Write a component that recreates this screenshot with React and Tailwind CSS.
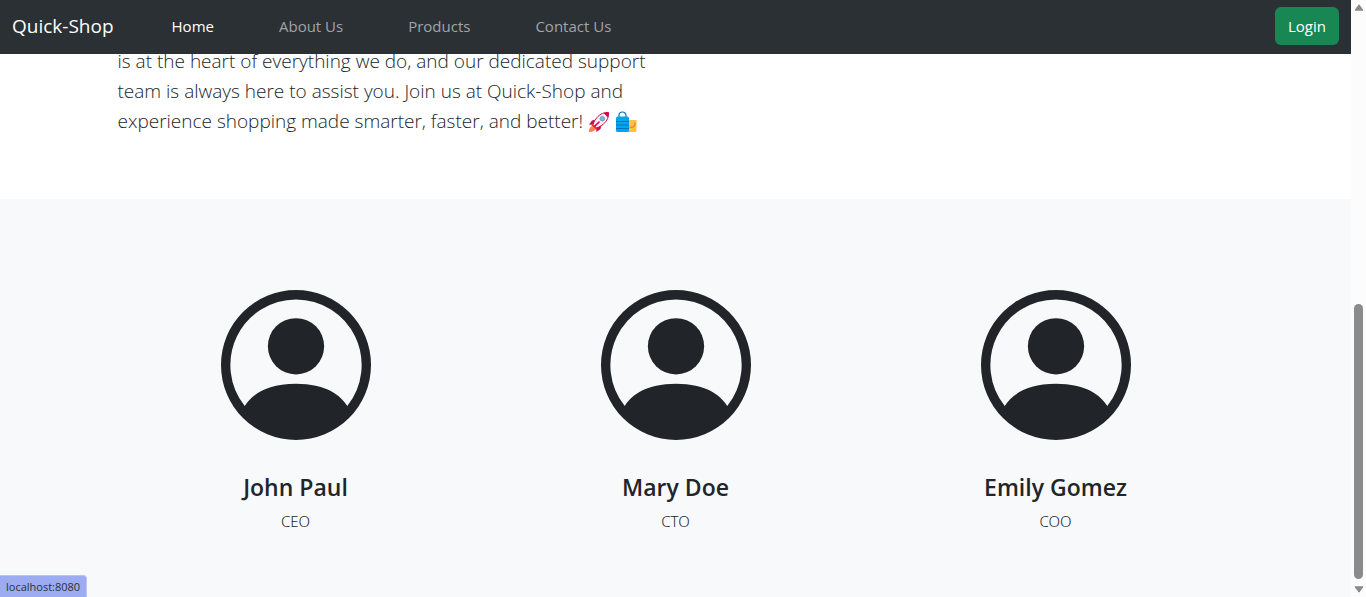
const links = [
  { label: "Home", href: "#home", active: true },
  { label: "About Us", href: "#about" },
  { label: "Products", href: "#products" },
  { label: "Contact Us", href: "#contact" },
];

const team = [
  { name: "John Paul", role: "CEO" },
  { name: "Mary Doe", role: "CTO" },
  { name: "Emily Gomez", role: "COO" },
];

function PersonCircle() {
  return (
    <svg viewBox="0 0 16 16" fill="currentColor" className="size-[150px]" aria-hidden="true">
      <path d="M11 6a3 3 0 1 1-6 0 3 3 0 0 1 6 0" />
      <path
        fillRule="evenodd"
        d="M0 8a8 8 0 1 1 16 0A8 8 0 0 1 0 8m8-7a7 7 0 0 0-5.468 11.37C3.242 11.226 4.805 10 8 10s4.757 1.225 5.468 2.37A7 7 0 0 0 8 1"
      />
    </svg>
  );
}

function Rocket() {
  return (
    <svg viewBox="0 0 22 22" className="inline-block size-[22px] align-[-5px]" role="img" aria-label="rocket">
      <path d="M1 21c-.3-2.500.8-5 3-6l3.300 3.300c-.8 2-3.500 3-6.300 2.700z" fill="#ff8257" />
      <path d="M8 8.500 4 9.500 1 13.500l5.500.500zM13.500 14l-1 4-4 3-.500-5.500z" fill="#ca0b4a" />
      <path
        d="M20.500 1.500c.6 4-1.500 8.500-5 11.500-2 1.700-4.500 3.300-7 4L5 13.500c.7-2.500 2.300-5 4-7C12 3 16.500 1 20.500 1.500z"
        fill="#f4f0f5"
        stroke="#ca0b4a"
        strokeWidth="1"
      />
      <path d="M15.500 2.100c1.700-.6 3.400-.8 5-.6.3 1.700 0 3.400-.6 5z" fill="#ca0b4a" />
      <circle cx="14.300" cy="7.700" r="2.300" fill="#6dbbe8" stroke="#7d8ba0" strokeWidth=".8" />
      <path d="m4.300 12.300 5.400 5.400-2.200.8-4-4z" fill="#f8312f" />
      <path d="m7 15 4-4" stroke="#ca0b4a" strokeWidth="1.600" strokeLinecap="round" />
    </svg>
  );
}

function ShoppingBags() {
  return (
    <svg viewBox="0 0 22 22" className="inline-block size-[22px] align-[-5px]" role="img" aria-label="shopping bags">
      <path d="M11 9h10.500v11a1 1 0 0 1-1 1H11z" fill="#ffc23d" />
      <path d="M20 11.500v1.500a3.500 3.500 0 0 1-5 3" fill="none" stroke="#e97e32" strokeWidth="1.200" strokeLinecap="round" />
      <path d="M4 6V4.500a3.500 3.500 0 0 1 7 0V6" fill="none" stroke="#0078b8" strokeWidth="1.200" />
      <path d="M2 5.500h11l1 1.500v12.500a1.500 1.500 0 0 1-1.500 1.500h-10A1.500 1.500 0 0 1 1 19.500V7z" fill="#00a6ed" />
      <path d="M1 10.500h13M1 14h13M1 17.500h13" stroke="#0074ba" strokeWidth="1" />
    </svg>
  );
}

function Scrollbar() {
  return (
    <div className="flex w-[15px] shrink-0 flex-col items-center bg-[#fcfcfc] py-1" aria-hidden="true">
      <svg viewBox="0 0 10 7" className="h-[7px] w-[10px]">
        <path d="M5 .8 9 6.200H1z" fill="#8b8b8b" stroke="#8b8b8b" strokeLinejoin="round" />
      </svg>
      <div className="flex w-[9px] flex-1 flex-col justify-end pb-[7px]">
        <div className="h-[48.5%] rounded-full bg-[#8b8b8b]" />
      </div>
      <svg viewBox="0 0 10 7" className="h-[7px] w-[10px]">
        <path d="M5 6.200 9 .8H1z" fill="#8b8b8b" stroke="#8b8b8b" strokeLinejoin="round" />
      </svg>
    </div>
  );
}

export default function App() {
  return (
    <div className="relative flex h-screen bg-white font-['Open_Sans','Noto_Sans',sans-serif] text-[#212529]">
      <div className="flex min-w-0 flex-1 flex-col overflow-hidden">
        <header className="relative z-10 flex h-[54px] shrink-0 items-center justify-between bg-[#2b3035] px-3 pb-[2px]">
          <nav className="flex items-center gap-[58px] whitespace-nowrap">
            <a href="#top" className="text-[19px] text-white">
              Quick-Shop
            </a>
            <ul className="flex gap-[65px] text-[15px]">
              {links.map((link) => (
                <li key={link.label}>
                  <a href={link.href} className={link.active ? "text-white" : "text-[#a1a4a6]"}>
                    {link.label}
                  </a>
                </li>
              ))}
            </ul>
          </nav>
          <button type="button" className="h-[38px] rounded-md bg-[#198754] px-[13px] text-[15px] text-white">
            Login
          </button>
        </header>

        <main className="-mt-2 flex flex-1 flex-col">
          <section className="mx-auto w-full max-w-[1140px] px-3 pb-[63px]">
            <p className="text-[19px] leading-[30px] font-light">
              <span className="block">is at the heart of everything we do, and our dedicated support</span>
              <span className="block">team is always here to assist you. Join us at Quick-Shop and</span>
              <span className="block">
                experience shopping made smarter, faster, and better! <Rocket /> <ShoppingBags />
              </span>
            </p>
          </section>

          <section className="flex-1 bg-[#f8f9fa] pt-[91px]">
            <ul className="mx-auto grid w-full max-w-[1140px] grid-cols-3">
              {team.map((person) => (
                <li key={person.name} className="flex flex-col items-center">
                  <PersonCircle />
                  <h2 className="mt-[31px] text-[23px] leading-8 font-semibold">{person.name}</h2>
                  <p className="mt-1 font-['Noto_Sans',sans-serif] text-[15px] leading-7 font-light">{person.role}</p>
                </li>
              ))}
            </ul>
          </section>
        </main>
      </div>

      <Scrollbar />

      <div className="absolute bottom-0 left-0 rounded-tr border-t border-r border-[#b9c3f5] bg-[#9dacf2] px-1.5 text-[11px] leading-[21px] text-[#2b3035]">
        localhost:8080
      </div>
    </div>
  );
}
